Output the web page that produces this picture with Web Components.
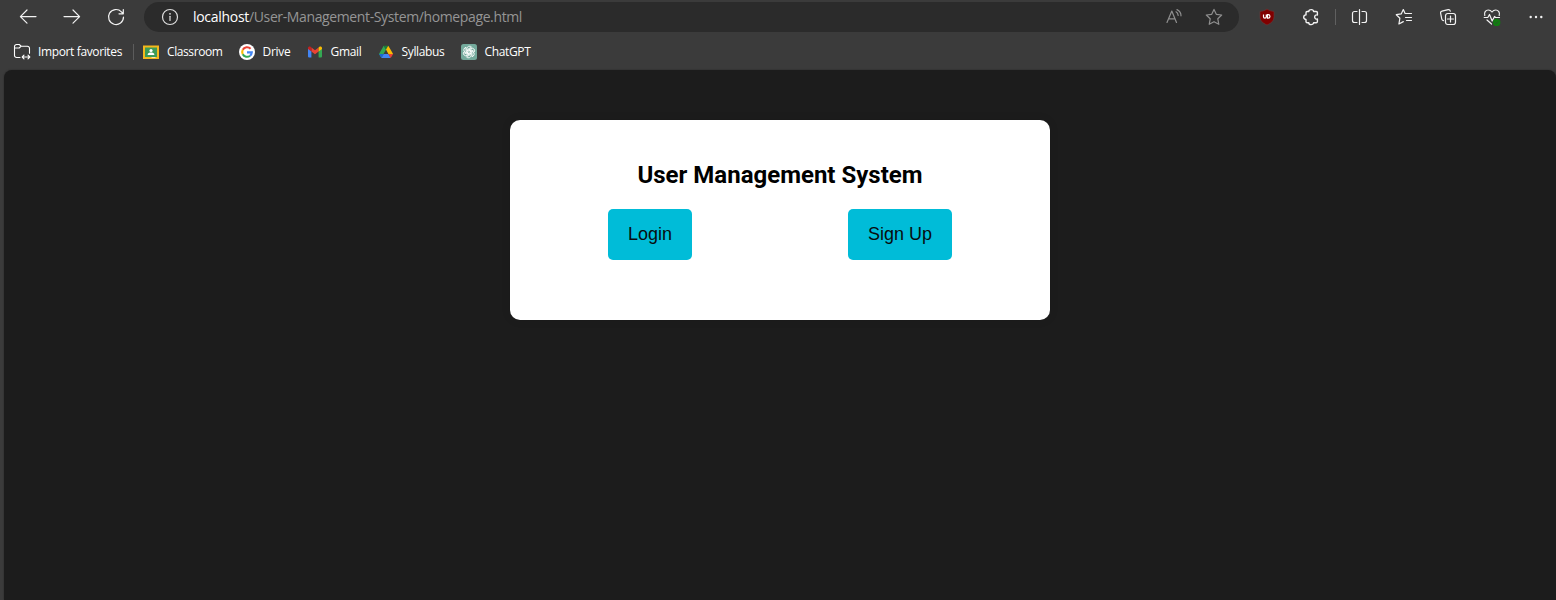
<!DOCTYPE html>
<html lang="en">
<head>
<meta charset="utf-8">
<title>User Management System</title>
<style>
html,body{margin:0;height:100%;overflow:hidden;background:#3b3b3b}
</style>
</head>
<body>
<browser-window></browser-window>
<script>
const line = 'fill="none" stroke="currentColor" stroke-width="1.2" stroke-linecap="round" stroke-linejoin="round"';
const icons = {
  back: `<g ${line}><path d="M18 9.6H2.5M9 3 2.4 9.6 9 16.2"/></g>`,
  forward: `<g ${line}><path d="M2 9.6h15.500M11 3l6.600 6.600L11 16.200"/></g>`,
  reload: `<g ${line}><path d="M17.500 10a7.500 7.500 0 1 1-2.100-5.200L17 6.500M17.300 2.500v4.300H13"/></g>`,
  info: `<g ${line}><circle cx="10" cy="10" r="7.500"/><path d="M10 9.300v4.200"/></g><circle cx="10" cy="6.800" r=".9" fill="currentColor"/>`,
  read: `<g ${line}><path d="M3 15.500 7.800 4l4.700 11.500M4.700 11.800h6.200M12 4.800c1.300.7 2 2 2.200 3.600M13 2.600c2.400 1.200 4 3.500 4 6.200"/></g>`,
  star: `<g ${line}><path d="m10 2.400 2.300 4.900 5.400.7-3.900 3.800 1 5.500L10 14.700l-4.800 2.600 1-5.500L2.300 8l5.400-.7z"/></g>`,
  puzzle: `<g ${line}><path stroke-width="1.400" d="M7.800 4.500a2.400 1.900 0 0 1 4.800 0h2.600a1.200 1.200 0 0 1 1.200 1.200V8a2.100 2.100 0 1 0 0 4v2.500a1.200 1.200 0 0 1-1.200 1.200h-2.600a2.400 1.900 0 0 1-4.800 0H6.200A1.200 1.200 0 0 1 5 14.500v-2a2.300 2.300 0 0 1 0-4.600V5.700a1.200 1.200 0 0 1 1.200-1.200z"/></g>`,
  split: `<g ${line}><path d="M7 4.500H4.500a2 2 0 0 0-2 2v7a2 2 0 0 0 2 2H7M12 4.500h2.500a2 2 0 0 1 2 2v7a2 2 0 0 1-2 2H12M9.500 2.500v15"/></g>`,
  favorites: `<g ${line}><path d="M12.500 6.500h-1.400L9.300 2.500 7.200 6.900l-4.900.8 3.600 3.500-1 5.800 4.400-2.400M12.500 6.500h5M11.500 10.500h6M12.500 13.500h5"/></g>`,
  collections: `<g ${line}><rect x="7.500" y="6.500" width="10" height="11" rx="2.200"/><path d="M12.500 9v6M9.500 12h6M5.500 13.700c-1-.2-1.500-.7-1.700-1.600L2.600 6.200c-.2-1 .4-1.800 1.400-2l6.200-1.500c1.100-.2 1.800.3 2.100 1.500"/></g>`,
  heart: `<g ${line}><path d="M2.800 8.500C1.800 5.500 3.700 3 6.300 3c1.600 0 2.800.8 3.700 2 .9-1.200 2.100-2 3.700-2 2.600 0 4.500 2.500 3.500 5.500M2.200 10.500h3.600l1.700-3 2.700 6.500 2.300-4.500 1 1h4M5 13l4.500 4"/></g><circle cx="14.700" cy="15.400" r="3.700" fill="#107c10"/><path d="m13 15.500 1.200 1.200 2.200-2.300" fill="none" stroke="#2f4d2f" stroke-width=".9"/>`,
  more: `<g fill="currentColor"><circle cx="4.700" cy="10" r="1.200"/><circle cx="10" cy="10" r="1.200"/><circle cx="15.300" cy="10" r="1.200"/></g>`,
  shield: `<path d="M10 2c2 1.500 4.300 2.200 7 2.400v5.200c0 4-2.500 6.500-7 8.400-4.500-1.900-7-4.400-7-8.400V4.400C5.700 4.200 8 3.500 10 2z" fill="#800000" stroke="#6b3a3a" stroke-width=".6"/><path d="M6.500 7.600v2.200a1.400 1.400 0 0 0 2.800 0V7.600M10.500 7.700v3.500h.7a1.750 1.750 0 0 0 0-3.500z" fill="none" stroke="#fff" stroke-width="1.200"/>`,
  folder: `<g ${line}><path stroke-width="1.100" d="M8 15.500H4.600a2.100 2.100 0 0 1-2.100-2.100V4.600a2.100 2.100 0 0 1 2.100-2.100h2.600l2 1.700h6.200a2.100 2.100 0 0 1 2.100 2.100v5M2.700 6h4.500l2-1.800M10.500 15h7M12 13.200 10.200 15l1.800 1.800M16 13.200l1.800 1.800-1.800 1.800"/></g>`,
  classroom: `<path d="M2 3.500h16v13.500H2z" fill="#f4b81c"/><path d="M4 5.500h12v9.500H4z" fill="#3c9b57"/><g fill="#fff"><circle cx="10" cy="8.500" r="1.600"/><path d="M6.700 13v-.8c0-1.200 1.900-1.700 3.300-1.700s3.300.5 3.300 1.700v.8z"/></g><path d="M10.500 15h4v1h-4z" fill="#f5e5b0"/>`,
  google: `<circle cx="10" cy="10" r="8" fill="#fff"/><g fill="none" stroke-width="2.100"><path d="M13.600 6.800A4.800 4.800 0 0 0 5.750 7.800" stroke="#ea4335"/><path d="M5.750 7.800a4.800 4.800 0 0 0 0 4.400" stroke="#fbbc05"/><path d="M5.750 12.200a4.800 4.800 0 0 0 7.300 1.500" stroke="#34a853"/><path d="M13.050 13.700A4.800 4.800 0 0 0 14.800 10.400H10" stroke="#4285f4"/></g>`,
  gmail: `<path d="M3 6.200V14.400a1.100 1.100 0 0 0 1.100 1.100h2.300V8.500z" fill="#4285f4"/><path d="M13.600 8.500v7h2.300a1.100 1.100 0 0 0 1.100-1.100V6.200z" fill="#34a853"/><path d="M6.400 5.500 10 8.300l3.600-2.800v4L10 12.300 6.400 9.500z" fill="#ea4335"/><path d="M3 7V6c0-1.500 1.700-2 2.800-1.100l.6.600v4z" fill="#c5221f"/><path d="M17 7V6c0-1.500-1.700-2-2.800-1.100l-.6.600v4z" fill="#fbbc04"/>`,
  drive: `<path d="M7.700 3.700 10 7.600 5.400 15.800 3 11.900z" fill="#34a853"/><path d="M7.700 3.700h4.600L10 7.600z" fill="#188038"/><path d="m12.300 3.700 4.800 8.200h-4.700L10 7.600z" fill="#fbbc04"/><path d="M3 11.900h4.800l-2.400 4.200z" fill="#1967d2"/><path d="M7.800 11.900h4.600l2.300 4.200H5.400z" fill="#4285f4"/><path d="M12.400 11.900h4.700l-2.400 4.200z" fill="#ea4335"/>`,
  chatgpt: `<rect x="2" y="2" width="16" height="16" rx="2.500" fill="#74aa9c"/><g fill="none" stroke="#fff" stroke-width=".85">${[0,60,120,180,240,300].map(a=>`<path transform="rotate(${a} 10 10)" d="M7.900 11.200V6.700a2.600 2.600 0 0 1 4.600-1.600L8.800 7.300v3.200"/>`).join('')}</g>`
};
function component(name, html, setup) {
  customElements.define(name, class extends HTMLElement {
    constructor() {
      super();
      const t = document.createElement('template');
      t.innerHTML = html;
      this.attachShadow({mode: 'open'}).append(t.content.cloneNode(true));
    }
    connectedCallback() { if (setup) setup(this); }
  });
}

component('ui-icon', `<style>:host{display:block;width:20px;height:20px;flex:none}svg{display:block}</style><svg width="20" height="20" viewBox="0 0 20 20"></svg>`,
  el => { el.shadowRoot.querySelector('svg').innerHTML = icons[el.getAttribute('name')] || ''; });

component('tool-button', `<style>:host{display:flex;width:44px;height:34px;align-items:center;justify-content:center;flex:none;color:#f2f2f2}</style><slot></slot>`);

// Spreads its letters so that the label takes exactly the given width.
component('fit-text', `<style>:host{display:block;flex:none;white-space:nowrap}span{display:inline-block}</style><span><slot></slot></span>`,
  el => {
    const span = el.shadowRoot.querySelector('span'), w = +el.getAttribute('width');
    el.style.width = w + 'px';
    span.style.letterSpacing = (w - span.getBoundingClientRect().width) / el.textContent.length + 'px';
  });

component('address-bar', `<style>
:host{display:flex;box-sizing:border-box;flex:1;height:30px;margin:0 6px;padding:0 15px 0 16px;border-radius:15px;background:#2b2b2b;align-items:center;color:#8f8f8f}
.info{color:#dedede;margin-right:13px}.text{display:flex;flex:1;font:14px/20px "Open Sans","Noto Sans",sans-serif;color:#959595}
.host{color:#fff}.star{margin-left:20px}
</style><ui-icon class="info" name="info"></ui-icon><div class="text"><fit-text class="host" width="56">localhost</fit-text><fit-text width="273">/User-Management-System/homepage.html</fit-text></div><ui-icon name="read"></ui-icon><ui-icon class="star" name="star"></ui-icon>`);

component('browser-toolbar', `<style>
:host{display:flex;height:34px;padding-left:6px;align-items:center}
.sep{width:1px;height:16px;margin:0 2px;background:#606060}
.last{width:40px;padding-left:2px}
</style>
<tool-button><ui-icon name="back"></ui-icon></tool-button>
<tool-button><ui-icon name="forward"></ui-icon></tool-button>
<tool-button><ui-icon name="reload"></ui-icon></tool-button>
<address-bar></address-bar>
<tool-button><ui-icon name="shield"></ui-icon></tool-button>
<tool-button><ui-icon name="puzzle"></ui-icon></tool-button>
<div class="sep"></div>
<tool-button><ui-icon name="split"></ui-icon></tool-button>
<tool-button><ui-icon name="favorites"></ui-icon></tool-button>
<tool-button><ui-icon name="collections"></ui-icon></tool-button>
<tool-button><ui-icon name="heart"></ui-icon></tool-button>
<tool-button class="last"><ui-icon name="more"></ui-icon></tool-button>`);

component('bookmark-item', `<style>:host{display:flex;align-items:center;gap:6px;color:#fff;font:12px/18px "Open Sans","Noto Sans",sans-serif}ui-icon{margin-left:-2px}</style><slot></slot>`,
  el => {
    const icon = document.createElement('ui-icon');
    icon.setAttribute('name', el.getAttribute('icon'));
    el.shadowRoot.querySelector('slot').before(icon);
  });

component('bookmarks-bar', `<style>
:host{display:flex;height:36px;padding-left:14px;align-items:center;gap:16px}
.sep{width:1px;height:16px;background:#5c5c5c;margin:0 -7px 0 -5px}
</style>
<bookmark-item icon="folder"><fit-text width="84">Import favorites</fit-text></bookmark-item>
<div class="sep"></div>
<bookmark-item icon="classroom"><fit-text width="55.500">Classroom</fit-text></bookmark-item>
<bookmark-item icon="google"><fit-text width="28">Drive</fit-text></bookmark-item>
<bookmark-item icon="gmail"><fit-text width="31">Gmail</fit-text></bookmark-item>
<bookmark-item icon="drive"><fit-text width="43">Syllabus</fit-text></bookmark-item>
<bookmark-item icon="chatgpt"><fit-text width="46">ChatGPT</fit-text></bookmark-item>`);

component('action-button', `<style>:host{display:block}
button{display:block;margin:0;border:0;border-radius:5px;padding:15px 20px;background:#00bcd8;color:#080c0e;font:18px/21px "Liberation Sans",Arial,sans-serif}</style><button><slot></slot></button>`);

component('home-card', `<style>
:host{display:block;box-sizing:border-box;width:540px;height:200px;padding:20px;background:#fff;border-radius:10px;box-shadow:0 0 10px rgba(0,0,0,.1)}
h2{margin:20px 0 18px;font:700 24px/31px Roboto,sans-serif;color:#000;text-align:center}
div{display:flex;justify-content:space-around}
</style><h2>User Management System</h2><div><action-button>Login</action-button><action-button>Sign Up</action-button></div>`);

component('browser-window', `<style>
:host{display:flex;flex-direction:column;height:600px;background:#3b3b3b}
main{flex:1;margin-left:4px;padding-top:50px;border-radius:8px 8px 0 0;background:#1c1c1c;display:flex;justify-content:center;align-items:flex-start;box-shadow:0 0 2px rgba(0,0,0,.35)}
</style><browser-toolbar></browser-toolbar><bookmarks-bar></bookmarks-bar><main><home-card></home-card></main>`);
</script>
</body>
</html>
